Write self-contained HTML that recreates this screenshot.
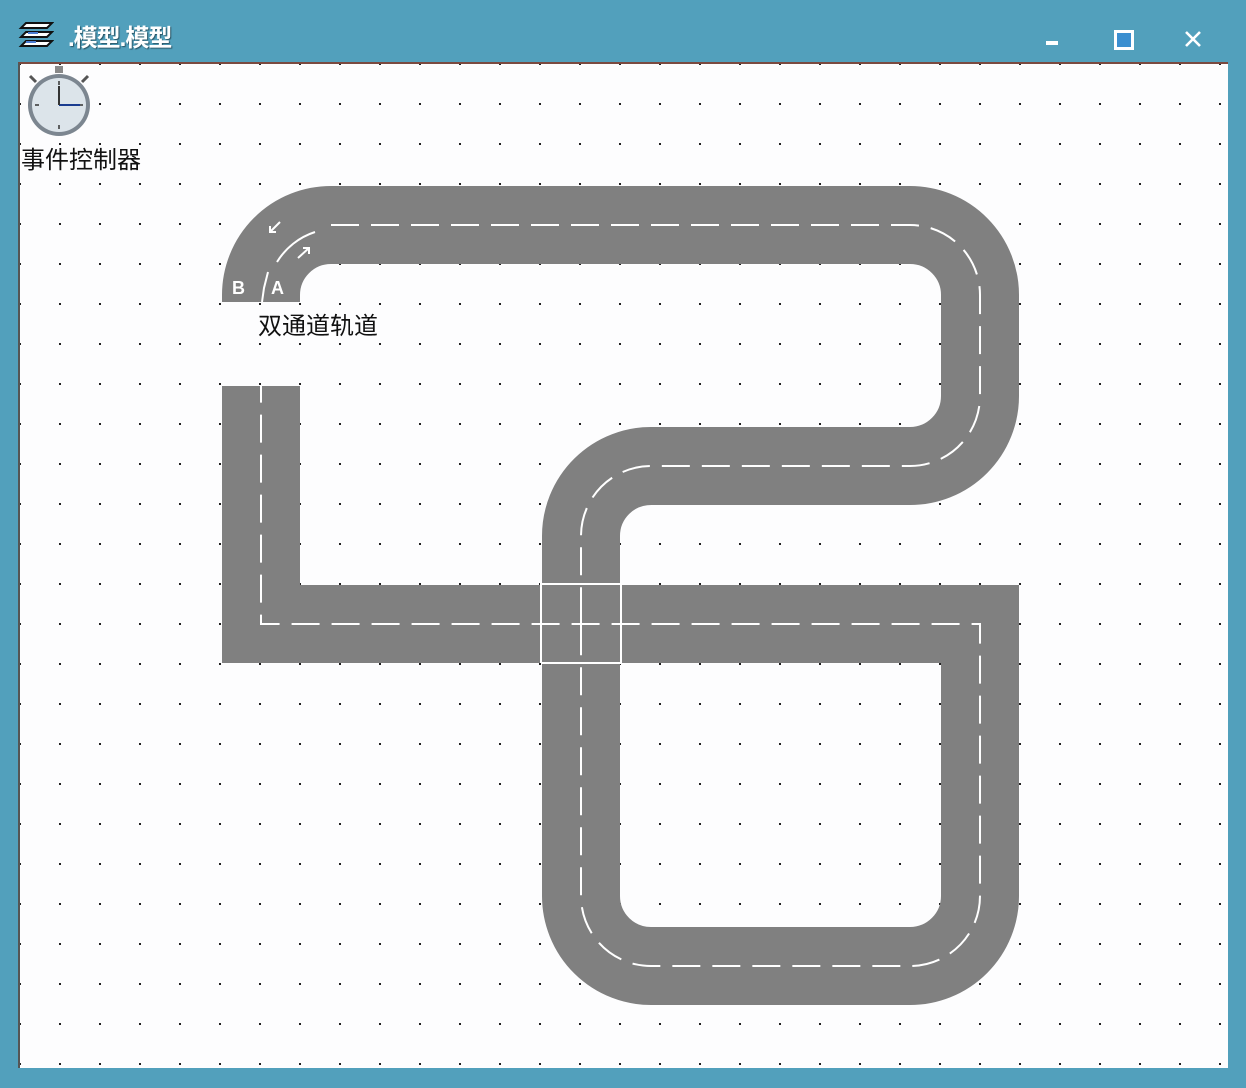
<!DOCTYPE html>
<html><head><meta charset="utf-8"><style>
html,body{margin:0;padding:0;width:1246px;height:1088px;overflow:hidden;background:#52a0bc;}
body{position:relative;font-family:"Liberation Sans","Noto Sans CJK SC",sans-serif;}
.title{position:absolute;left:68px;top:18px;font-size:24px;color:#fff;text-shadow:1px 1px 1px #2a5566;letter-spacing:-1px;font-weight:bold;}
.canvas{position:absolute;left:18px;top:62px;width:1210px;height:1006px;background:#fdfdfe;border-top:2px solid #7a4a40;border-left:2px solid #555;box-sizing:border-box;}
.lbl{position:absolute;font-size:24px;color:#111;white-space:nowrap;}
</style></head><body>
<svg style="position:absolute;left:18px;top:20px" width="36" height="30" viewBox="0 0 36 30">
<path d="M8 3h26l-5 5H3z M8 12h26l-5 5H3z M8 21h26l-5 5H3z" fill="#fff" stroke="#111" stroke-width="2"/>
<path d="M10 13h10 M8 22h10" stroke="#4a7bd0" stroke-width="2"/>
</svg>
<div class="title">.模型.模型</div>
<div style="position:absolute;left:1046px;top:41px;width:12px;height:4px;background:#fff"></div>
<div style="position:absolute;left:1114px;top:30px;width:14px;height:14px;border:3px solid #fff;background:#3b8fd0"></div>
<svg style="position:absolute;left:1184px;top:30px" width="18" height="18"><path d="M2 2L16 16M16 2L2 16" stroke="#fff" stroke-width="2.6"/></svg>
<div class="canvas"></div>
<svg style="position:absolute;left:0;top:0" width="1246" height="1088">
<defs><pattern id="d" x="59" y="103" width="40" height="40" patternUnits="userSpaceOnUse"><rect width="2" height="2" fill="#222"/></pattern></defs>
<rect x="20" y="64" width="1208" height="1004" fill="url(#d)"/>
<g fill="none" stroke="#808080" stroke-width="78" stroke-linejoin="miter">
<path d="M261 302 L261 295 A70 70 0 0 1 331 225 L910 225 A70 70 0 0 1 980 296 L980 396 A70 70 0 0 1 910 466 L652 466 A70 70 0 0 0 581 536 L581 896 A70 70 0 0 0 652 966 L910 966 A70 70 0 0 0 980 896 L980 624 L261 624 L261 386"/>
</g>
<g fill="none" stroke="#fff" stroke-width="2" stroke-dasharray="28 12">
<path d="M331 225 L910 225 A70 70 0 0 1 980 296 L980 396 A70 70 0 0 1 910 466 L652 466 A70 70 0 0 0 581 536 L581 896 A70 70 0 0 0 652 966 L910 966 A70 70 0 0 0 980 896 L980 624 L261 624 L261 386"/>
</g>
<path d="M277 262 A70 70 0 0 1 315 232" stroke="#fff" stroke-width="2" fill="none"/>
<path d="M262 302 L264 288 L268 272" stroke="#fff" stroke-width="2" fill="none"/>
<path d="M280 222 L270 232 M270 226 L270 232 L276 232 M298 258 L309 248 M303 248 L309 248 L309 254" stroke="#fff" stroke-width="2" fill="none"/>
<text x="232" y="294" font-size="18" fill="#fff" font-weight="bold" font-family="Liberation Sans">B</text>
<text x="271" y="294" font-size="18" fill="#fff" font-weight="bold" font-family="Liberation Sans">A</text>
<g stroke="#fff" stroke-width="2">
<line x1="541" y1="583" x2="541" y2="663"/><line x1="621" y1="583" x2="621" y2="663"/>
<line x1="541" y1="584" x2="621" y2="584"/><line x1="541" y1="663" x2="621" y2="663"/>
<line x1="581" y1="600" x2="581" y2="650"/>
</g>
<g>
<line x1="36" y1="82" x2="30" y2="76" stroke="#555" stroke-width="3"/>
<line x1="82" y1="82" x2="88" y2="76" stroke="#555" stroke-width="3"/>
<rect x="55" y="66" width="8" height="7" fill="#888"/>
<circle cx="59" cy="105" r="31" fill="#7c8690"/>
<circle cx="59" cy="105" r="27" fill="#dce4ea"/>
<g stroke="#333" stroke-width="1.5">
<line x1="59" y1="81" x2="59" y2="85"/><line x1="59" y1="125" x2="59" y2="129"/>
<line x1="35" y1="105" x2="39" y2="105"/><line x1="79" y1="105" x2="83" y2="105"/>
</g>
<line x1="59" y1="105" x2="80" y2="105" stroke="#1a3c90" stroke-width="2"/>
<line x1="59" y1="105" x2="59" y2="86" stroke="#333" stroke-width="2"/>
</g>
</svg>
<div class="lbl" style="left:21px;top:140px">事件控制器</div>
<div class="lbl" style="left:258px;top:306px">双通道轨道</div>
</body></html>
